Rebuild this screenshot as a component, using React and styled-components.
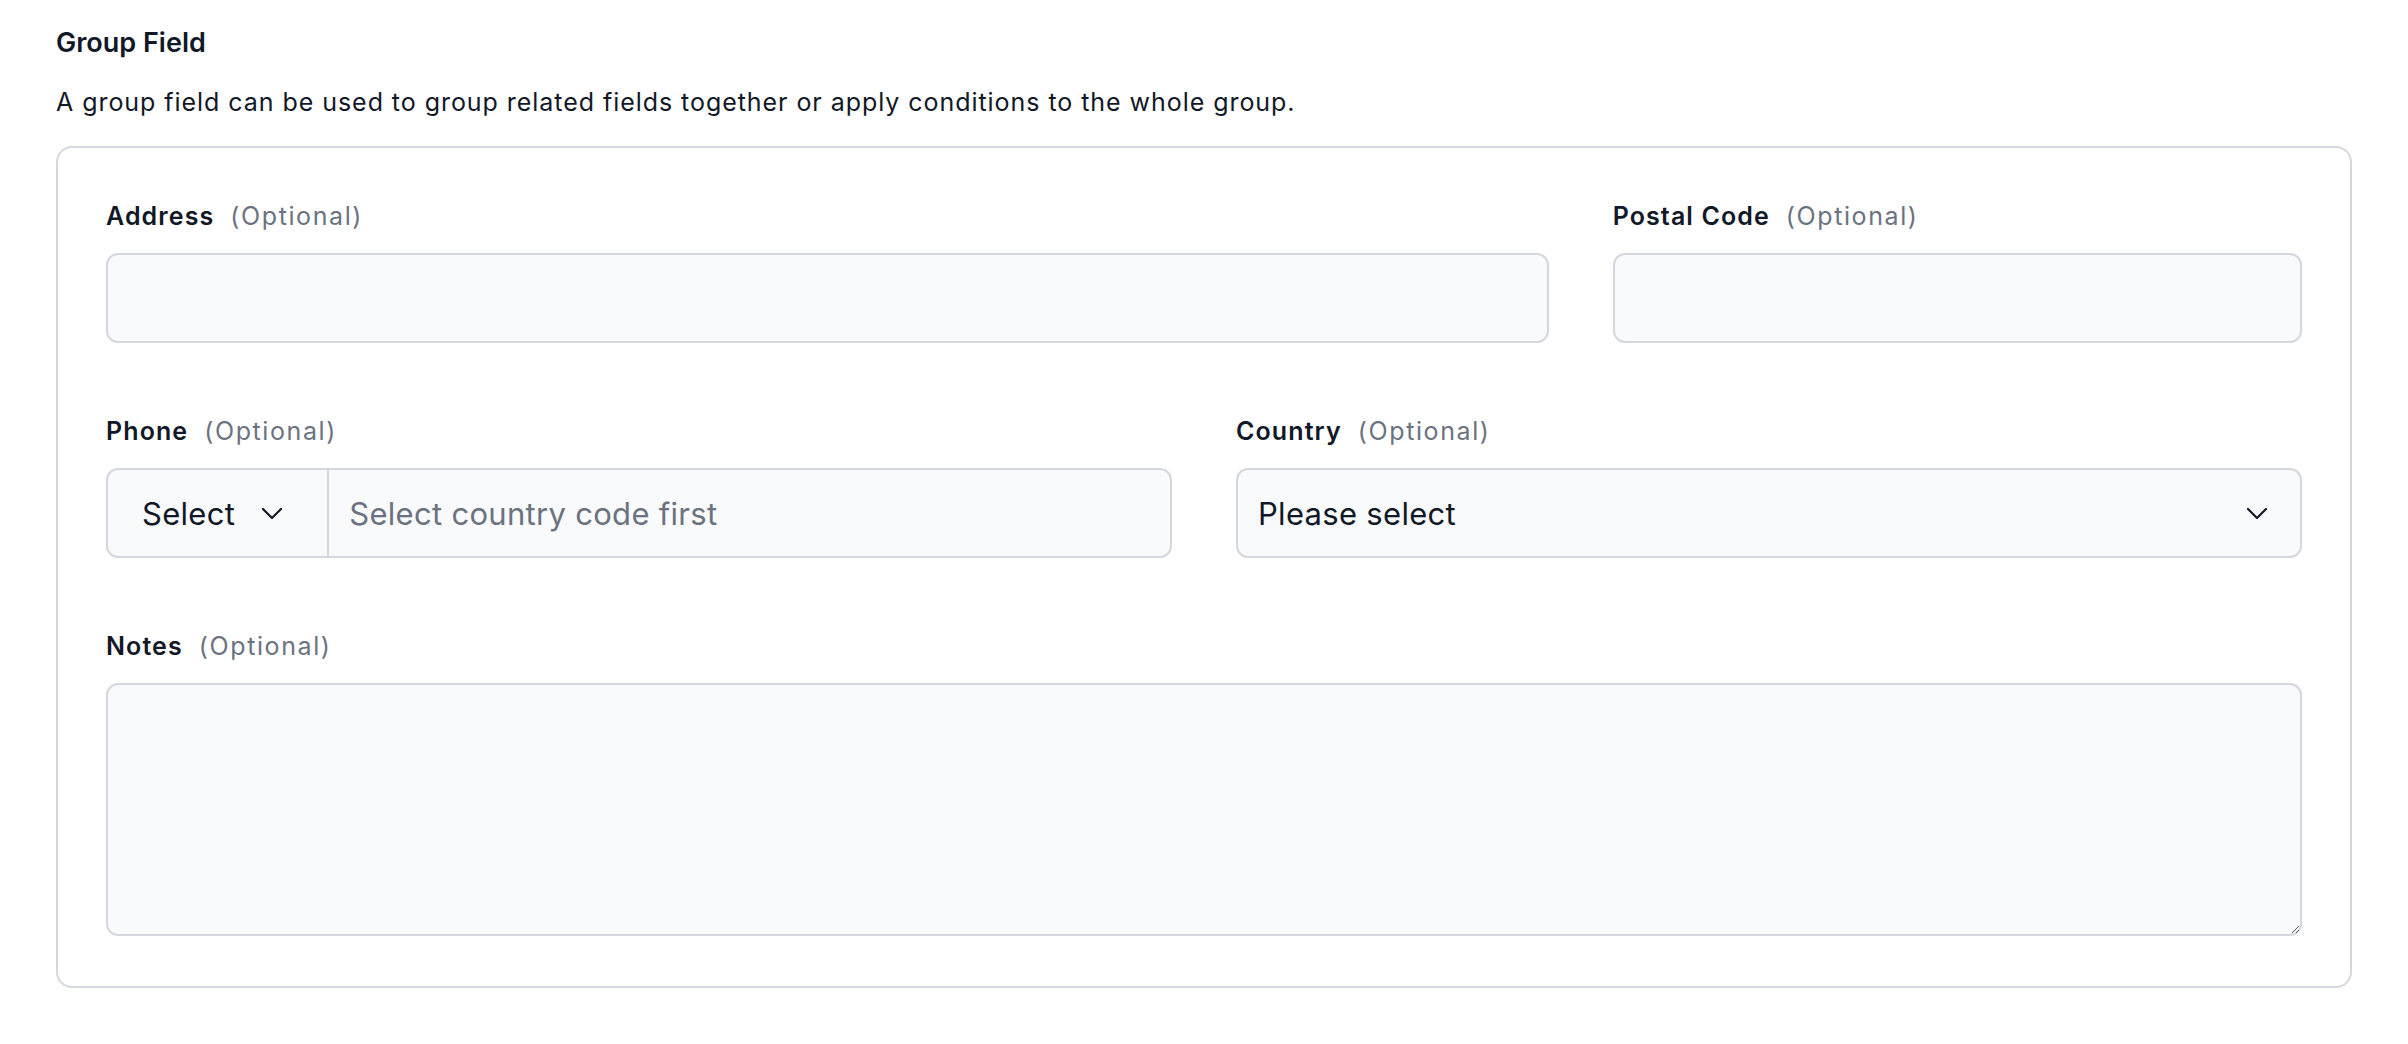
import React from "react";
import styled, { createGlobalStyle } from "styled-components";

const GlobalStyle = createGlobalStyle`
  html, body { margin: 0; padding: 0; background: #ffffff; }
  body { font-family: Inter, "Noto Sans", "Liberation Sans", sans-serif; color: #111827; }
  * { box-sizing: border-box; }
`;

const Page = styled.div`
  padding: 23px 56px 40px;
`;

const Title = styled.h2`
  margin: 0;
  font-size: 27px;
  line-height: 40px;
  font-weight: 600;
  color: #111827;
`;

const Description = styled.p`
  margin: 21px 0 0;
  font-size: 25px;
  line-height: 36px;
  letter-spacing: 0.95px;
  font-weight: 400;
  color: #111827;
`;

const Card = styled.div`
  margin-top: 26px;
  border: 2px solid #d4d7dd;
  border-radius: 16px;
  padding: 50px 48px;
  background: #ffffff;
`;

const Grid = styled.div`
  display: grid;
  grid-template-columns: repeat(6, minmax(0, 1fr));
  column-gap: 64px;
  row-gap: 70px;
`;

const Field = styled.div`
  display: flex;
  flex-direction: column;
  grid-column: span ${(p) => p.$span};
`;

const LabelRow = styled.label`
  display: flex;
  align-items: baseline;
  font-size: 25px;
  line-height: 36px;
  margin-bottom: 19px;
`;

const LabelText = styled.span`
  font-weight: 600;
  letter-spacing: 1.1px;
  color: #111827;
`;

const Optional = styled.span`
  margin-left: 16px;
  font-weight: 400;
  letter-spacing: 1.6px;
  color: #6b7280;
`;

const TextInput = styled.input`
  display: block;
  width: 100%;
  height: 90px;
  border: 2px solid #d4d7dd;
  border-radius: 12px;
  background: #f9fafb;
  padding: 0 20px;
  font-family: inherit;
  font-size: 31px;
  color: #111827;
  outline: none;
`;

const PhoneGroup = styled.div`
  display: flex;
  height: 90px;
  border: 2px solid #d4d7dd;
  border-radius: 12px;
  background: #f9fafb;
  overflow: hidden;
`;

const CodeSelect = styled.div`
  display: flex;
  align-items: center;
  gap: 26px;
  padding: 0 44px 0 34px;
  border-right: 2px solid #d4d7dd;
  font-size: 31px;
  letter-spacing: 0.3px;
  color: #111827;
`;

const PhoneInput = styled.input`
  flex: 1;
  min-width: 0;
  border: none;
  background: transparent;
  padding: 0 20px;
  font-family: inherit;
  font-size: 31px;
  letter-spacing: 0.3px;
  color: #111827;
  outline: none;
  &::placeholder { color: #6b7280; opacity: 1; }
`;

const SelectBox = styled.div`
  display: flex;
  align-items: center;
  justify-content: space-between;
  height: 90px;
  border: 2px solid #d4d7dd;
  border-radius: 12px;
  background: #f9fafb;
  padding: 0 32px 0 20px;
  font-size: 31px;
  letter-spacing: 0.3px;
  color: #111827;
`;

const TextArea = styled.textarea`
  display: block;
  width: 100%;
  height: 253px;
  border: 2px solid #d4d7dd;
  border-radius: 12px;
  background: #f9fafb;
  padding: 16px 20px;
  font-family: inherit;
  font-size: 31px;
  color: #111827;
  resize: vertical;
  outline: none;
`;

const Chevron = () => (
  <svg width="22" height="13" viewBox="0 0 22 13" fill="none">
    <polyline
      points="2,2 11,11 20,2"
      stroke="#111827"
      strokeWidth="2.2"
      strokeLinecap="round"
      strokeLinejoin="round"
    />
  </svg>
);

const Label = ({ children }) => (
  <LabelRow>
    <LabelText>{children}</LabelText>
    <Optional>(Optional)</Optional>
  </LabelRow>
);

export default function App() {
  return (
    <>
      <GlobalStyle />
      <Page>
        <Title>Group Field</Title>
        <Description>
          A group field can be used to group related fields together or apply conditions to the whole group.
        </Description>
        <Card>
          <Grid>
            <Field $span={4}>
              <Label>Address</Label>
              <TextInput type="text" />
            </Field>
            <Field $span={2}>
              <Label>Postal Code</Label>
              <TextInput type="text" />
            </Field>
            <Field $span={3}>
              <Label>Phone</Label>
              <PhoneGroup>
                <CodeSelect>
                  <span>Select</span>
                  <Chevron />
                </CodeSelect>
                <PhoneInput type="text" placeholder="Select country code first" />
              </PhoneGroup>
            </Field>
            <Field $span={3}>
              <Label>Country</Label>
              <SelectBox>
                <span>Please select</span>
                <Chevron />
              </SelectBox>
            </Field>
            <Field $span={6}>
              <Label>Notes</Label>
              <TextArea />
            </Field>
          </Grid>
        </Card>
      </Page>
    </>
  );
}
